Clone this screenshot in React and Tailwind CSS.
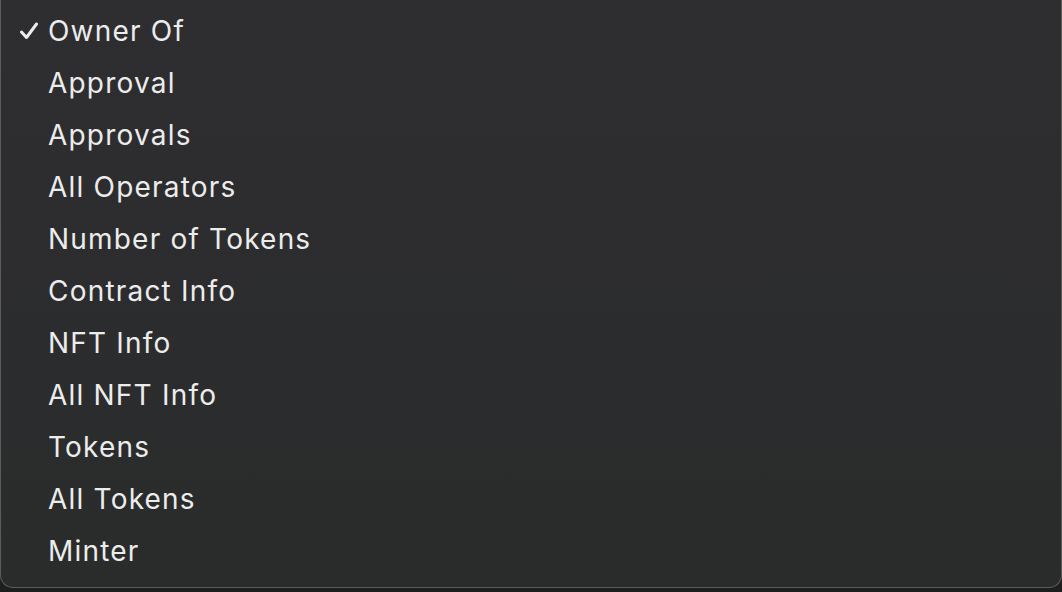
import React from 'react';

const items = [
  'Owner Of',
  'Approval',
  'Approvals',
  'All Operators',
  'Number of Tokens',
  'Contract Info',
  'NFT Info',
  'All NFT Info',
  'Tokens',
  'All Tokens',
  'Minter',
];

function Check() {
  return (
    <svg width="20" height="18" viewBox="0 0 20 18" className="text-[#ededed]">
      <path d="M2.5 10 L7.5 15.5 L17.5 2" fill="none" stroke="currentColor" strokeWidth="3" strokeLinecap="round" strokeLinejoin="round" />
    </svg>
  );
}

export default function App() {
  return (
    <div className="w-[1062px] h-[592px] bg-[#1e1e1e] overflow-hidden" style={{ fontFamily: 'Inter, "Liberation Sans", sans-serif' }}>
      <div className="h-[588px] border-x border-b border-[#5c5c5c] rounded-b-[13px] bg-gradient-to-b from-[#2e2e31] to-[#2a2b2b] pt-[5px]">
        {items.map((item, i) => (
          <div key={i} className="h-[52px] flex items-center">
            <div className="w-[47px] flex justify-end pr-[9px]">
              {i === 0 && <Check />}
            </div>
            <span className="text-[28px] text-[#ececec] leading-none tracking-[1.2px]">{item}</span>
          </div>
        ))}
      </div>
    </div>
  );
}
